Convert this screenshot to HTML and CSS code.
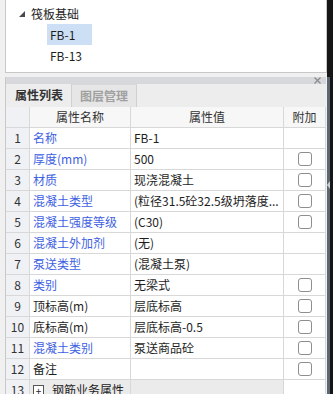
FILE: index.html
```html
<!DOCTYPE html>
<html lang="zh-CN">
<head>
  <meta charset="UTF-8">
  <title>属性列表</title>
  <link rel="stylesheet" href="styles.css">
</head>
<body>

  <div class="main">
    <!-- 构件树 -->
    <div class="tree">
      <div class="tree-node">
        <svg class="tree-arrow" width="6" height="6" viewBox="0 0 6 6"><polygon points="6,0 6,6 0,6" fill="#4a4a4a"/></svg>
        <span>筏板基础</span>
      </div>
      <div class="tree-leaf"><span class="selected">FB-1</span></div>
      <div class="tree-leaf"><span>FB-13</span></div>
    </div>

    <!-- 属性面板 -->
    <div class="panel">
      <div class="panel-title">
        <svg class="close" width="7" height="7" viewBox="0 0 7 7"><path d="M0.5 0.5L6.5 6.5M6.5 0.5L0.5 6.5" stroke="#8c8c8c" stroke-width="1.3"/></svg>
      </div>
      <div class="tabs">
        <div class="tab active">属性列表</div>
        <div class="tab">图层管理</div>
      </div>

      <div class="grid">
        <div class="cell num head"></div>
        <div class="cell head center">属性名称</div>
        <div class="cell head center">属性值</div>
        <div class="cell head center">附加</div>

        <div class="cell num">1</div>
        <div class="cell name blue">名称</div>
        <div class="cell">FB-1</div>
        <div class="cell extra"></div>

        <div class="cell num">2</div>
        <div class="cell name blue">厚度(mm)</div>
        <div class="cell">500</div>
        <div class="cell extra"><span class="check"></span></div>

        <div class="cell num">3</div>
        <div class="cell name blue">材质</div>
        <div class="cell">现浇混凝土</div>
        <div class="cell extra"><span class="check"></span></div>

        <div class="cell num">4</div>
        <div class="cell name blue">混凝土类型</div>
        <div class="cell">(粒径31.5砼32.5级坍落度...</div>
        <div class="cell extra"><span class="check"></span></div>

        <div class="cell num">5</div>
        <div class="cell name blue">混凝土强度等级</div>
        <div class="cell">(C30)</div>
        <div class="cell extra"><span class="check"></span></div>

        <div class="cell num">6</div>
        <div class="cell name blue">混凝土外加剂</div>
        <div class="cell">(无)</div>
        <div class="cell extra"></div>

        <div class="cell num">7</div>
        <div class="cell name blue">泵送类型</div>
        <div class="cell">(混凝土泵)</div>
        <div class="cell extra"></div>

        <div class="cell num">8</div>
        <div class="cell name blue">类别</div>
        <div class="cell">无梁式</div>
        <div class="cell extra"><span class="check"></span></div>

        <div class="cell num">9</div>
        <div class="cell name">顶标高(m)</div>
        <div class="cell">层底标高</div>
        <div class="cell extra"><span class="check"></span></div>

        <div class="cell num">10</div>
        <div class="cell name">底标高(m)</div>
        <div class="cell">层底标高-0.5</div>
        <div class="cell extra"><span class="check"></span></div>

        <div class="cell num">11</div>
        <div class="cell name blue">混凝土类别</div>
        <div class="cell">泵送商品砼</div>
        <div class="cell extra"><span class="check"></span></div>

        <div class="cell num">12</div>
        <div class="cell name">备注</div>
        <div class="cell"></div>
        <div class="cell extra"><span class="check"></span></div>

        <div class="cell num">13</div>
        <div class="cell group"><span class="expand">+</span>钢筋业务属性</div>
        <div class="cell group"></div>
        <div class="cell extra"></div>
      </div>
    </div>
  </div>

  <!-- 右侧停靠条 -->
  <div class="dock">
    <div class="dock-top"></div>
    <div class="dock-body">
      <div class="splitter">
        <svg class="notch" width="3" height="8" viewBox="0 0 3 8"><polygon points="3,0 3,8 0,4" fill="#c9ced4"/></svg>
      </div>
      <div class="edge"></div>
    </div>
  </div>

</body>
</html>
```

FILE: styles.css
```css
/* General */
* {
  margin: 0;
  padding: 0;
  box-sizing: border-box;
}

body {
  font-family: "Noto Sans CJK SC", "Noto Sans", sans-serif;
  font-size: 12px;
  color: #1e1e1e;
  background-color: #f0f0f0;
  display: flex;
  height: 394px;
  overflow: hidden;
}

.main {
  width: 327px;
  padding-left: 5px;
  display: flex;
  flex-direction: column;
}

/* Tree */
.tree {
  height: 73px;
  background-color: #fff;
  border: 1px solid #c8c8c8;
  border-top: none;
  padding-top: 3px;
  line-height: 21px;
}

.tree-node {
  display: flex;
  align-items: center;
  padding-left: 13px;
}

.tree-arrow {
  margin-right: 6px;
}

.tree-leaf {
  padding-left: 41px;
}

.tree-leaf span {
  display: inline-block;
  padding: 0 5px 0 3px;
}

.tree-leaf .selected {
  background-color: #cddff4;
  width: 45px;
}

/* Panel */
.panel {
  margin-top: 4px;
  margin-right: 1px;
  flex: 1;
  border-left: 1px solid #c8c8c8;
  display: flex;
  flex-direction: column;
  overflow: hidden;
}

.panel-title {
  height: 10px;
  background-color: #d6d8dc;
  display: flex;
  justify-content: flex-end;
  align-items: center;
  padding-right: 5px;
}

.close {
  display: block;
}

.tabs {
  height: 23px;
  background-color: #ededed;
  display: flex;
  padding-left: 1px;
}

.tab {
  width: 65px;
  height: 23px;
  line-height: 22px;
  text-align: center;
  color: #a0a0a0;
  font-weight: bold;
  background-color: #e6e6e6;
  border-right: 1px solid #d0d0d0;
  border-top: 1px solid #d8d8d8;
}

.tab.active {
  color: #333;
  background-color: #ededed;
  border-top: none;
}

/* Property grid */
.grid {
  display: grid;
  grid-template-columns: 24px 101px 153px 42px;
  grid-auto-rows: 21px;
  background-color: #fff;
}

.cell {
  border-right: 1px solid #d8d8d8;
  border-bottom: 1px solid #d8d8d8;
  line-height: 20px;
  padding-left: 3px;
  white-space: nowrap;
  overflow: hidden;
}

.cell.head {
  background-color: #f7f7f7;
  color: #333;
}

.center {
  text-align: center;
  padding-left: 0;
}

.cell.num {
  background-color: #eff1f4;
  text-align: center;
  padding-left: 0;
  color: #333;
}

.blue {
  color: #3e5fe2;
}

.cell.extra {
  display: flex;
  align-items: center;
  justify-content: center;
  padding-left: 1px;
}

.check {
  width: 14px;
  height: 14px;
  border: 1px solid #8e8e8e;
  border-radius: 3px;
  background-color: #fff;
}

.cell.group {
  background-color: #ebebeb;
  display: flex;
  align-items: center;
}

.expand {
  width: 11px;
  height: 11px;
  border: 1px solid #555;
  font-size: 10px;
  line-height: 9px;
  text-align: center;
  margin-right: 8px;
  background-color: #fff;
}

/* Right dock strip */
.dock {
  width: 6px;
  display: flex;
  flex-direction: column;
}

.dock-top {
  height: 77px;
  background-color: #161616;
}

.dock-body {
  flex: 1;
  display: flex;
}

.splitter {
  width: 3px;
  background-color: #5c6774;
  padding-top: 104px;
}

.notch {
  display: block;
}

.edge {
  flex: 1;
  background-color: #161616;
}
```
